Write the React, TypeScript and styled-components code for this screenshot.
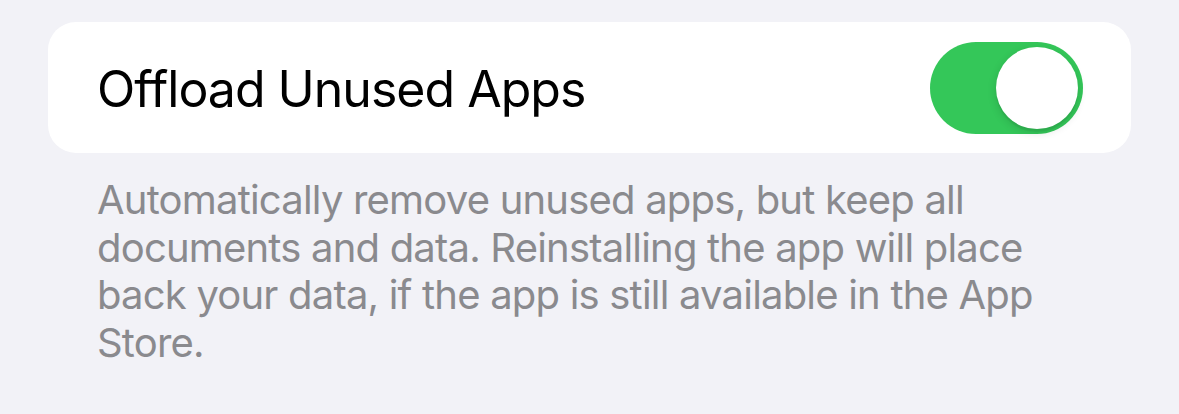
import React, { useState } from "react";
import styled, { createGlobalStyle } from "styled-components";

const Global = createGlobalStyle`
  html, body { margin: 0; padding: 0; background: #F2F2F7; }
  body { font-family: Inter, "Noto Sans", sans-serif; -webkit-font-smoothing: antialiased; }
`;

const Page = styled.div`
  padding: 22px 48px 0 48px;
  display: flex;
  flex-direction: column;
`;

const Card = styled.div`
  background: #ffffff;
  border-radius: 28px;
  height: 131px;
  display: flex;
  align-items: center;
  justify-content: space-between;
  padding: 0 48px 0 49px;
  box-sizing: border-box;
`;

const Title = styled.span`
  font-size: 50px;
  line-height: 60px;
  padding-top: 2px;
  color: #000;
  letter-spacing: -1px;
`;

const Track = styled.button<{ $on: boolean }>`
  position: relative;
  width: 153px;
  height: 92px;
  border-radius: 46px;
  border: none;
  padding: 0;
  background: ${(p) => (p.$on ? "#34C759" : "#E9E9EA")};
  cursor: pointer;
`;

const Knob = styled.span<{ $on: boolean }>`
  position: absolute;
  top: 5px;
  left: ${(p) => (p.$on ? "66px" : "5px")};
  width: 82px;
  height: 82px;
  border-radius: 50%;
  background: #fff;
  box-shadow: 0 3px 10px rgba(0, 0, 0, 0.14), 0 3px 1px rgba(0, 0, 0, 0.05);
`;

const Footer = styled.p`
  margin: 23px 0 0 0;
  padding: 0 30px 0 49px;
  font-size: 40px;
  line-height: 47.5px;
  letter-spacing: -0.8px;
  color: #8A8A8E;
`;

export default function App() {
  const [on, setOn] = useState(true);
  return (
    <>
      <Global />
      <Page>
        <Card>
          <Title>Offload Unused Apps</Title>
          <Track $on={on} onClick={() => setOn(!on)} aria-label="Offload Unused Apps">
            <Knob $on={on} />
          </Track>
        </Card>
        <Footer>
          Automatically remove unused apps, but keep all documents and data. Reinstalling the app will place back your data, if the app is still available in the App Store.
        </Footer>
      </Page>
    </>
  );
}
